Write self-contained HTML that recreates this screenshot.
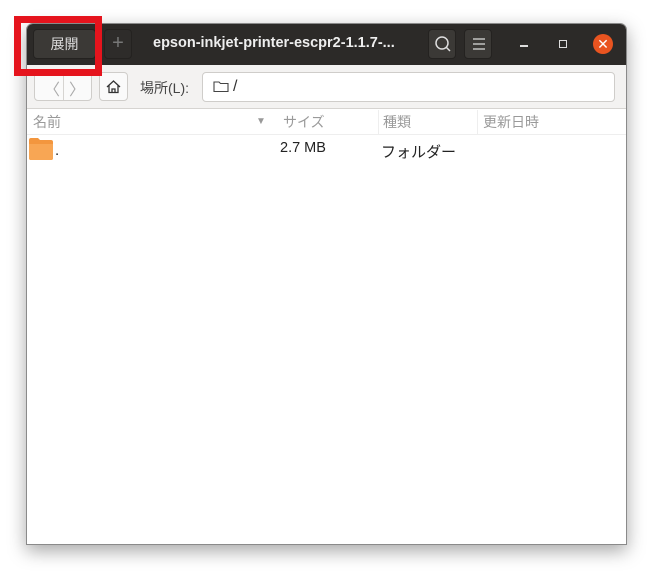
<!DOCTYPE html>
<html><head><meta charset="utf-8"><style>
*{box-sizing:border-box;margin:0;padding:0}
body{width:652px;height:573px;background:#fff;position:relative;overflow:hidden;font-family:"Liberation Sans","Noto Sans CJK JP",sans-serif}
.win{position:absolute;left:26px;top:23px;width:601px;height:522px;background:#fff;border:1px solid #8a8a8a;border-radius:7px 7px 0 0;box-shadow:0 6px 18px rgba(0,0,0,.35);overflow:hidden}
.hb{position:absolute;left:0;top:0;width:100%;height:41px;background:#2c2a28}
.btn{position:absolute;background:#3b3936;border-radius:4px;border:1px solid #242220;color:#ddd}
.tb{position:absolute;left:0;top:41px;width:100%;height:44px;background:#f3f2f1;border-bottom:1px solid #d6d4d1}
.wb{position:absolute;background:#fafafa;border:1px solid #cfcdca;border-radius:4px}
.ch{position:absolute;top:86px;height:24px;font-size:14px;color:#9a9a9a;line-height:24px}
.red{position:absolute;left:14px;top:16px;width:88px;height:60px;border:7px solid #e5141d}
</style></head><body>
<div class="win">
 <div class="hb">
  <div class="btn" style="left:6px;top:5px;width:63px;height:30px;font-size:14px;line-height:28px;text-align:center">展開</div>
  <div class="btn" style="left:77px;top:5px;width:28px;height:30px;background:#2e2c2a;color:#777;font-size:20px;line-height:27px;text-align:center">+</div>
  <div style="position:absolute;left:126px;top:11px;color:#eee;font-weight:bold;font-size:14.5px">epson-inkjet-printer-escpr2-1.1.7-...</div>
  <div class="btn" style="left:401px;top:5px;width:28px;height:30px"><svg width="28" height="28"><circle cx="13" cy="13" r="6" fill="none" stroke="#ddd" stroke-width="1.5"/><path d="M17 17l4 4" stroke="#ddd" stroke-width="1.5"/></svg></div>
  <div class="btn" style="left:437px;top:5px;width:28px;height:30px"><svg width="28" height="28"><path d="M8 9h12M8 14h12M8 19h12" stroke="#ddd" stroke-width="1.2"/></svg></div>
  <div style="position:absolute;left:493px;top:21px;width:8px;height:1.5px;background:#ddd"></div>
  <div style="position:absolute;left:532px;top:16px;width:8px;height:8px;border:1.5px solid #ddd"></div>
  <div style="position:absolute;left:566px;top:10px;width:20px;height:20px;border-radius:50%;background:#e95420;color:#fff;font-size:14px;line-height:20px;text-align:center">✕</div>
 </div>
 <div class="tb">
  <div class="wb" style="left:7px;top:7px;width:58px;height:29px"><div style="position:absolute;left:28px;top:0;width:1px;height:27px;background:#d6d4d1"></div><span style="position:absolute;left:9px;top:3px;color:#aaa;font-size:16px">〈</span><span style="position:absolute;left:34px;top:3px;color:#aaa;font-size:16px">〉</span></div>
  <div class="wb" style="left:72px;top:7px;width:29px;height:29px"><svg width="27" height="27"><path d="M7 14l6.5-6 6.5 6M9 12.5v7h9v-7M12 19.5v-3.5h3v3.5" fill="none" stroke="#333" stroke-width="1.3"/></svg></div>
  <div style="position:absolute;left:113px;top:13px;font-size:14px;color:#444">場所(L):</div>
  <div class="wb" style="left:175px;top:7px;width:413px;height:30px;background:#fff"><svg width="20" height="28" style="position:absolute;left:8px;top:0"><path d="M3 9h5l1.5 1.5H17v8H3z" fill="none" stroke="#444" stroke-width="1.1"/></svg><span style="position:absolute;left:30px;top:5px;font-size:16px;color:#333">/</span></div>
 </div>
 <div class="ch" style="left:6px">名前</div>
 <div class="ch" style="left:229px;color:#999;font-size:10px">▼</div>
 <div class="ch" style="left:256px;width:95px">サイズ</div>
 <div class="ch" style="left:351px;border-left:1px solid #eee;padding-left:4px;width:99px">種類</div>
 <div class="ch" style="left:450px;border-left:1px solid #eee;padding-left:5px">更新日時</div>
 <div style="position:absolute;left:0;top:110px;width:100%;height:1px;background:#eee"></div>
 <svg style="position:absolute;left:1px;top:112px" width="26" height="26"><path d="M1 4q0-2 2-2h7l2 2h11q2 0 2 2v16q0 2-2 2H3q-2 0-2-2z" fill="#f3963e"/><path d="M1 8h24v14q0 2-2 2H3q-2 0-2-2z" fill="#f8a654"/></svg>
 <div style="position:absolute;left:28px;top:118px;font-size:15px;color:#222">.</div>
 <div style="position:absolute;left:253px;top:116px;font-size:14.5px;color:#222">2.7 MB</div>
 <div style="position:absolute;left:354px;top:117px;font-size:15px;color:#222">フォルダー</div>
</div>
<div class="red"></div>
</body></html>
